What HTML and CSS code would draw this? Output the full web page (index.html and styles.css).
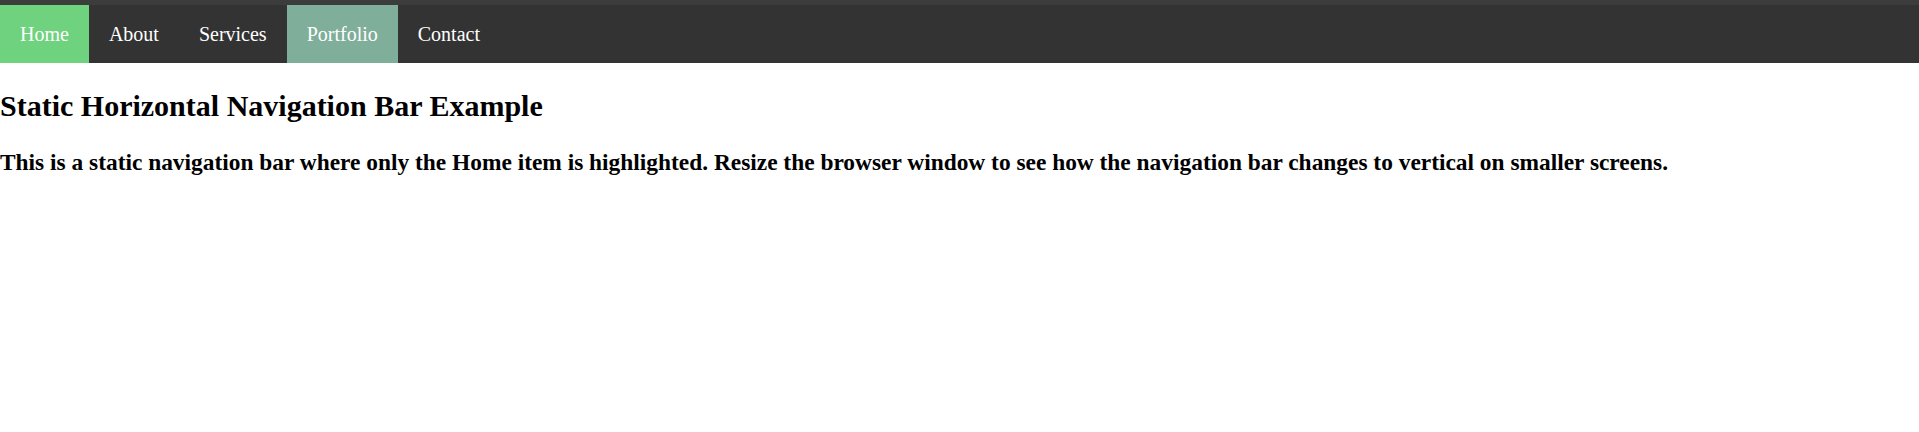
FILE: index.html
```html
<!DOCTYPE html>
<html>
<head>
<meta charset="utf-8">
<title>Static Horizontal Navigation Bar</title>
<link rel="stylesheet" href="styles.css">
</head>
<body>
<div class="topstrip"></div>
<ul class="navbar">
  <li><a class="active" href="#">Home</a></li>
  <li><a href="#">About</a></li>
  <li><a href="#">Services</a></li>
  <li><a class="hl" href="#">Portfolio</a></li>
  <li><a href="#">Contact</a></li>
</ul>
<h2 class="title">Static Horizontal Navigation Bar Example</h2>
<h3 class="desc">This is a static navigation bar where only the Home item is highlighted. Resize the browser window to see how the navigation bar changes to vertical on smaller screens.</h3>
</body>
</html>
```

FILE: styles.css
```css
body {
  margin: 0;
  font-family: "Liberation Serif", "Times New Roman", serif;
  color: #000;
  background: #fff;
}
.topstrip {
  height: 5px;
  background: #3c3c3c;
}
.navbar {
  list-style: none;
  margin: 0;
  padding: 0;
  display: flex;
  background: #333333;
}
.navbar a {
  display: block;
  color: #fff;
  text-decoration: none;
  font-size: 20px;
  line-height: 22px;
  padding: 18px 20px;
}
.navbar a.active {
  background: #6fd27e;
}
.navbar a.hl {
  background: #7fae9a;
}
.title {
  font-size: 30px;
  line-height: 34px;
  margin: 26px 0 26px;
}
.desc {
  font-size: 23.4px;
  line-height: 27px;
  margin: 0;
}
```
